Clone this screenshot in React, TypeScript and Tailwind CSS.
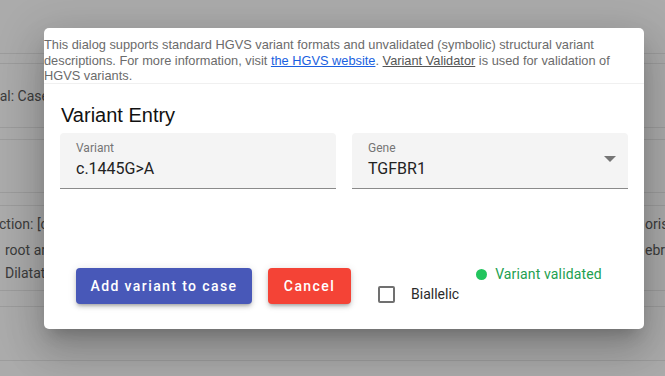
import { useState } from 'react';

const BgRow = ({ h, children }: { h: string; children?: React.ReactNode }) => (
    <div className={`${h} border-b border-[#9c9c9c]`}>{children}</div>
);

const Field = ({ label, value, select }: { label: string; value: string; select?: boolean }) => (
    <div className="relative flex-1 h-[56px] bg-[#f4f4f4] rounded-t-[4px] border-b border-[#8a8a8a] px-[16px] pt-[7px]">
        <div className="text-[12px] leading-[16px] text-[#757575]">{label}</div>
        <div className="text-[16px] leading-[24px] text-[#222] mt-[1px]">{value}</div>
        {select && (
            <svg className="absolute right-[12px] top-[22px] w-[12px] h-[8px]" viewBox="0 0 10 5">
                <path d="M0 0l5 5 5-5z" fill="#757575" />
            </svg>
        )}
    </div>
);

export default function App() {
    const [biallelic, setBiallelic] = useState(false);

    return (
        <div className="relative w-[665px] h-[376px] overflow-hidden bg-[#ababab] font-['Roboto',sans-serif] text-[14px] text-[#3c3c3c]">
            {/* page behind the backdrop */}
            <div className="flex flex-col">
                <BgRow h="h-[54px]" />
                <BgRow h="h-[10px]" />
                <BgRow h="h-[64px]">
                    <div className="pt-[22px] -ml-[8px] whitespace-nowrap">ual: Case</div>
                </BgRow>
                <BgRow h="h-[12px]" />
                <BgRow h="h-[53px]" />
                <BgRow h="h-[13px]" />
                <BgRow h="h-[85px]">
                    <div className="flex justify-between pt-[5px] leading-[26px] whitespace-nowrap">
                        <div>
                            <div className="-ml-[1px]">ction: [c</div>
                            <div className="pl-[5px]">root ar</div>
                            <div className="pl-[5px] -mt-[3px]">Dilatat</div>
                        </div>
                        <div className="w-[20px]">
                            <div>oris</div>
                            <div>ebr</div>
                        </div>
                    </div>
                </BgRow>
                <BgRow h="h-[16px]" />
                <BgRow h="h-[54px]" />
            </div>

            {/* dialog */}
            <div className="absolute left-[44px] top-[28px] w-[600px] h-[301px] bg-white rounded-[5px] shadow-[0_11px_15px_-7px_rgba(0,0,0,0.2),0_24px_38px_3px_rgba(0,0,0,0.14),0_9px_46px_8px_rgba(0,0,0,0.12)] flex flex-col">
                <p className="pt-[9px] pr-[20px] text-[12.8px] leading-[15.5px] text-[#6b6b6b] font-['Liberation_Sans',sans-serif] h-[55px]">
                    This dialog supports standard HGVS variant formats and unvalidated (symbolic) structural variant
                    descriptions. For more information, visit{' '}
                    <a className="text-[#1a5fe0] underline">the HGVS website</a>.{' '}
                    <a className="underline text-[#555]">Variant Validator</a> is used for validation of HGVS variants.
                </p>
                <div className="flex-1 border-t border-[#f0f0f0] px-[16px] pt-[18px]">
                    <h2 className="pl-[1px] text-[20px] leading-[26px] text-[#111] font-['Liberation_Sans',sans-serif]">
                        Variant Entry
                    </h2>
                    <div className="flex gap-[16px] mt-[5px]">
                        <Field label="Variant" value="c.1445G>A" />
                        <Field label="Gene" value="TGFBR1" select />
                    </div>
                    <div className="flex items-start mt-[79px] pl-[16px]">
                        <button className="h-[36px] w-[176px] rounded-[4px] bg-[#4858b8] text-white text-[14px] font-medium tracking-[0.1em] shadow-[0_3px_3px_-2px_rgba(0,0,0,0.2),0_3px_4px_0_rgba(0,0,0,0.14),0_1px_8px_0_rgba(0,0,0,0.12)]">
                            Add variant to case
                        </button>
                        <button className="ml-[16px] h-[36px] w-[83px] rounded-[4px] bg-[#f44336] text-white text-[14px] font-medium tracking-[0.1em] shadow-[0_3px_3px_-2px_rgba(0,0,0,0.2),0_3px_4px_0_rgba(0,0,0,0.14),0_1px_8px_0_rgba(0,0,0,0.12)]">
                            Cancel
                        </button>
                        <label className="flex items-center ml-[27px] mt-[16px] cursor-pointer">
                            <input
                                type="checkbox"
                                checked={biallelic}
                                onChange={() => setBiallelic(!biallelic)}
                                className="appearance-none w-[17px] h-[17px] border-2 border-[#707070] rounded-[2px] checked:bg-[#4858b8] checked:border-[#4858b8]"
                            />
                            <span className="ml-[16px] text-[14px] text-[#2a2a2a]">Biallelic</span>
                        </label>
                        <div className="flex items-center ml-[17px] -mt-[4px] text-[14px] text-[#22a04f] tracking-[0.01em]">
                            <span className="w-[11px] h-[11px] rounded-full bg-[#22c55e]" />
                            <span className="ml-[8px]">Variant validated</span>
                        </div>
                    </div>
                </div>
            </div>
        </div>
    );
}
